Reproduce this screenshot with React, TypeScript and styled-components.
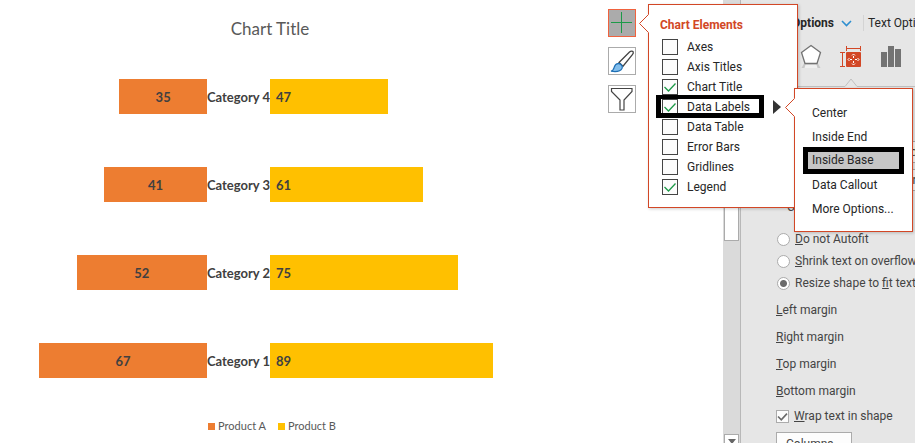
import React from "react";
import styled, { createGlobalStyle } from "styled-components";

const ACCENT = "#d24726";
const UI_FONT = 'Roboto, "Open Sans", sans-serif';
const CHART_FONT = 'Lato, "Open Sans", sans-serif';

const GlobalStyle = createGlobalStyle`
  *, *::before, *::after { box-sizing: border-box; }
  body { margin: 0; background: #fff; font-family: ${UI_FONT}; font-size: 12px; }
  button, input, select { font: inherit; color: inherit; margin: 0; }
`;

const Page = styled.div`
  position: relative;
  display: flex;
  height: 100vh;
  overflow: hidden;
`;

/* ---------- Chart ---------- */

const Chart = styled.main`
  flex: 1;
  min-width: 0;
  padding-top: 16px;
  font-family: ${CHART_FONT};
`;

const ChartTitle = styled.h1`
  margin: 0;
  text-align: center;
  font-size: 17px;
  line-height: 26px;
  font-weight: 400;
  color: #595959;
`;

const Plot = styled.div`
  display: grid;
  gap: 53px;
  padding: 37px 0;
`;

const PlotRow = styled.div`
  display: grid;
  grid-template-columns: 207fr 63px 270fr;
  height: 35px;
  align-items: center;
  font-size: 13px;
  font-weight: 700;
  color: #404040;
`;

const Category = styled.span`
  display: flex;
  justify-content: center;
  white-space: nowrap;
`;

const Bar = styled.div<{ $side: "left" | "right" }>`
  display: flex;
  align-items: center;
  height: 35px;
  justify-self: ${(p) => (p.$side === "left" ? "end" : "start")};
  justify-content: ${(p) => (p.$side === "left" ? "center" : "flex-start")};
  padding-left: ${(p) => (p.$side === "left" ? 0 : 6)}px;
  background: ${(p) => (p.$side === "left" ? "#ed7d31" : "#ffc000")};
`;

const Legend = styled.div`
  display: flex;
  justify-content: center;
  gap: 12px;
  padding-left: 4px;
  font-size: 11px;
  line-height: 22px;
  color: #595959;
`;

const LegendItem = styled.span<{ $color: string }>`
  display: flex;
  align-items: center;
  gap: 3px;
  &::before {
    content: "";
    width: 7px;
    height: 7px;
    background: ${(p) => p.$color};
  }
`;

const Tools = styled.div`
  display: flex;
  flex-direction: column;
  gap: 10px;
  width: 183px;
  padding: 9px 0 0 68px;
`;

const ToolButton = styled.button<{ $active?: boolean }>`
  display: grid;
  place-items: center;
  width: 28px;
  height: 28px;
  padding: 0;
  border: 1px solid ${(p) => (p.$active ? "#f0623e" : "#ababab")};
  background: ${(p) => (p.$active ? "#ababab" : "#fff")};
`;

/* ---------- Scrollbar ---------- */

const ScrollTrack = styled.div`
  display: flex;
  flex-direction: column;
  justify-content: space-between;
  width: 17px;
  padding: 6px 1px 0;
  background: #dadada;
`;

const ScrollThumb = styled.div`
  height: 235px;
  border: 1px solid #ababab;
  background: #fff;
`;

const ScrollDown = styled.button`
  display: grid;
  place-items: start center;
  width: 100%;
  height: 9px;
  padding: 4px 0 0;
  border: 1px solid #ababab;
  border-bottom: 0;
  background: #fff;
`;

/* ---------- Format pane ---------- */

const Pane = styled.aside`
  width: 175px;
  overflow: hidden;
  border-left: 1px solid #b8b8b8;
  background: #e6e6e6;
  color: #444;
  white-space: nowrap;
`;

const PaneTabs = styled.div`
  display: flex;
  align-items: center;
  height: 32px;
  margin-top: 7px;
  color: #262626;
`;

const PaneTab = styled.button<{ $current?: boolean }>`
  flex: none;
  width: ${(p) => (p.$current ? "111px" : "auto")};
  display: flex;
  align-items: center;
  justify-content: flex-end;
  gap: 7px;
  padding: 0;
  border: 0;
  background: none;
  font-size: 12px;
  font-weight: ${(p) => (p.$current ? 700 : 400)};
`;

const TabRule = styled.span`
  flex: none;
  width: 1px;
  height: 16px;
  margin: 0 4px 0 11px;
  background: #d4d4d4;
`;

const IconTabs = styled.div`
  display: flex;
  align-items: center;
  gap: 18px;
  padding: 4px 0 0 59px;
`;

const IconTab = styled.button`
  flex: none;
  display: grid;
  place-items: center;
  width: 22px;
  height: 26px;
  padding: 0;
  border: 0;
  background: none;
`;

const PaneRule = styled.svg`
  display: block;
  width: 174px;
  height: 10px;
  margin: 8px 0 54px;
`;

const PaneSelect = styled.select`
  display: block;
  appearance: none;
  width: 120px;
  height: 22px;
  margin: 0 0 6px 149px;
  padding: 0 6px;
  border: 1px solid #ababab;
  border-radius: 0;
  background: #f6f6f6;
`;

const CustomAngle = styled.div`
  padding-left: 46px;
  line-height: 20px;
`;

const RadioGroup = styled.div`
  display: grid;
  padding: 11px 0 3px 36px;
`;

const Choice = styled.label`
  display: flex;
  align-items: center;
  gap: 5px;
  height: 22px;
`;

const Radio = styled.input`
  appearance: none;
  flex: none;
  width: 13px;
  height: 13px;
  border: 1px solid #ababab;
  border-radius: 50%;
  background: #fff;
  &:checked {
    background: radial-gradient(circle, #6a6a6a 3px, #fff 4px);
  }
`;

const MarginLabel = styled.div`
  padding-left: 35px;
  line-height: 27px;
`;

const WrapChoice = styled(Choice)`
  padding-left: 35px;
`;

const ColumnsButton = styled.button`
  display: block;
  width: 76px;
  height: 24px;
  margin: 5px 0 0 35px;
  padding: 0 9px;
  border: 1px solid #ababab;
  background: #fdfdfd;
  text-align: left;
`;

/* ---------- Flyouts ---------- */

const Flyout = styled.section`
  position: absolute;
  border: 1px solid ${ACCENT};
  background: #fff;
  box-shadow: 1px 1px 3px rgba(0, 0, 0, 0.2);
  color: #262626;
  white-space: nowrap;
`;

const ElementsFlyout = styled(Flyout)`
  top: 4px;
  right: 117px;
  width: 150px;
  padding: 9px 0 10px 7px;
`;

const LabelsFlyout = styled(Flyout)`
  top: 88px;
  right: 2px;
  width: 119px;
  padding: 12px 8px 10px;
`;

const Notch = styled.svg`
  position: absolute;
  left: -10px;
  top: 9px;
  width: 10px;
  height: 19px;
`;

const FlyoutTitle = styled.h2`
  margin: 0 0 1px 4px;
  font-size: 12px;
  line-height: 22px;
  font-weight: 700;
  color: ${ACCENT};
`;

const ElementRow = styled.label<{ $marked?: boolean }>`
  position: relative;
  display: flex;
  align-items: center;
  gap: 9px;
  height: 20px;
  padding-left: 6px;
  &::after {
    content: "";
    display: ${(p) => (p.$marked ? "block" : "none")};
    position: absolute;
    left: 0;
    top: -2px;
    width: 108px;
    height: 23px;
    border: 5px solid #000;
    border-top-width: 4px;
  }
`;

const CheckWrap = styled.span<{ $size: number }>`
  flex: none;
  display: grid;
  width: ${(p) => p.$size}px;
  height: ${(p) => p.$size}px;
  & > * {
    grid-area: 1 / 1;
  }
  & > svg {
    pointer-events: none;
    width: 100%;
    height: 100%;
  }
  & > input:not(:checked) + svg {
    visibility: hidden;
  }
`;

const CheckInput = styled.input<{ $edge: string }>`
  appearance: none;
  width: 100%;
  height: 100%;
  border: 1px solid ${(p) => p.$edge};
  background: #fcfcfc;
`;

const Submenu = styled.svg`
  position: absolute;
  left: 117px;
  top: 3px;
  width: 8px;
  height: 14px;
`;

const MenuItem = styled.button<{ $marked?: boolean }>`
  display: block;
  position: relative;
  z-index: ${(p) => (p.$marked ? 1 : 0)};
  width: 101px;
  height: ${(p) => (p.$marked ? 27 : 24)}px;
  margin: ${(p) => (p.$marked ? "-2px 0 -1px" : "0")};
  padding: 0 0 0 ${(p) => (p.$marked ? 4 : 9)}px;
  border: ${(p) => (p.$marked ? "5px solid #000" : "0")};
  background: ${(p) => (p.$marked ? "#c6c6c6" : "none")};
  line-height: 17px;
  text-align: left;
`;

const ROWS = [
  { name: "Category 4", a: 35, b: 47 },
  { name: "Category 3", a: 41, b: 61 },
  { name: "Category 2", a: 52, b: 75 },
  { name: "Category 1", a: 67, b: 89 },
];

const LEFT_MAX = 82.6;
const RIGHT_MAX = 107.8;

const ELEMENTS: [string, boolean][] = [
  ["Axes", false],
  ["Axis Titles", false],
  ["Chart Title", true],
  ["Data Labels", true],
  ["Data Table", false],
  ["Error Bars", false],
  ["Gridlines", false],
  ["Legend", true],
];

const POSITIONS = ["Center", "Inside End", "Inside Base", "Data Callout", "More Options..."];

const PlusIcon = () => (
  <svg width="22" height="22" viewBox="0 0 22 22" stroke="#1d9a48" fill="none">
    <path d="M10.5 0v21M0 10.5h21" />
  </svg>
);

const BrushIcon = () => (
  <svg width="26" height="26" viewBox="0 0 26 26">
    <path d="M10 14.5 20.5 4c1.4-1.2 3.2-.9 3.6-.3.4.7.1 2-.7 3L14 18.2z" fill="#fff" stroke="#444" strokeWidth="1.3" />
    <path d="M2 23.2c2.6-.7 2.7-2.3 3.3-4.2.7-2.3 2.6-3.8 4.8-3.3 2.6.7 3.9 2.8 2.9 4.8-1.6 3.2-6.3 3.4-11 2.7z" fill="#83beec" stroke="#1e6fb4" strokeWidth="1.2" />
  </svg>
);

const FunnelIcon = () => (
  <svg width="26" height="26" viewBox="0 0 26 26" fill="#fff" stroke="#444" strokeWidth="1.2">
    <path d="M2.5 2.5h20.5v3l-8 8.500v10h-4v-10l-8.500-8.500z" />
  </svg>
);

const PentagonIcon = () => (
  <svg width="22" height="26" viewBox="0 0 22 26">
    <path d="M4 20.500h14l2.500 4.500H1.500z" fill="#c8c8c8" />
    <path d="M5.500 21.500h11l1 3.500h-13z" fill="#f0f0f0" />
    <path d="M11 2.500 20.500 9.500 17 20.500H5L1.500 9.500z" fill="#fff" stroke="#737373" strokeWidth="1.300" />
  </svg>
);

const SizeIcon = () => (
  <svg width="22" height="26" viewBox="0 0 22 26" fill="none">
    <rect x="6" y="9" width="15" height="15" rx="1" fill={ACCENT} />
    <path d="M6.500 3v5M20.500 3v5M7 5.500h13M0 9.500h5M0 23.500h5M2.500 10v13" stroke={ACCENT} />
    <path d="M13.500 13v2M13.500 18v2M10 16.500h2M15 16.500h2" stroke="#fff" />
    <path d="M12 12.500l1.500-1.500 1.500 1.500M12 20.500l1.500 1.500 1.500-1.500M9.500 15 8 16.500l1.500 1.500M17.500 15l1.500 1.500-1.500 1.500" stroke="#fff" />
  </svg>
);

const ColumnsIcon = () => (
  <svg width="22" height="26" viewBox="0 0 22 26" fill="#737373">
    <path d="M1 9h6v15H1zM8 3h6v21H8zM15 6h6v18h-6z" />
  </svg>
);

const NotchShape = () => (
  <Notch viewBox="0 0 10 19">
    <path d="M10 0v19L.5 9.500z" fill="#fff" />
    <path d="M9.500 .5.500 9.500l9 9" fill="none" stroke={ACCENT} />
  </Notch>
);

function Tick({ size, edge, color, checked }: { size: number; edge: string; color: string; checked: boolean }) {
  return (
    <CheckWrap $size={size}>
      <CheckInput type="checkbox" defaultChecked={checked} $edge={edge} />
      <svg viewBox="0 0 16 16" fill="none" stroke={color} strokeWidth={size > 14 ? 1.3 : 2}>
        <path d="M2.500 8 6.500 12 13.500 4.500" />
      </svg>
    </CheckWrap>
  );
}

export default function App() {
  return (
    <Page>
      <GlobalStyle />
      <Chart>
        <ChartTitle>Chart Title</ChartTitle>
        <Plot>
          {ROWS.map((r) => (
            <PlotRow key={r.name}>
              <Bar $side="left" style={{ width: `${(r.a / LEFT_MAX) * 100}%` }}>{r.a}</Bar>
              <Category>{r.name}</Category>
              <Bar $side="right" style={{ width: `${(r.b / RIGHT_MAX) * 100}%` }}>{r.b}</Bar>
            </PlotRow>
          ))}
        </Plot>
        <Legend>
          <LegendItem $color="#ed7d31">Product A</LegendItem>
          <LegendItem $color="#ffc000">Product B</LegendItem>
        </Legend>
      </Chart>
      <Tools>
        <ToolButton $active aria-label="Chart elements"><PlusIcon /></ToolButton>
        <ToolButton aria-label="Chart styles"><BrushIcon /></ToolButton>
        <ToolButton aria-label="Chart filters"><FunnelIcon /></ToolButton>
      </Tools>
      <ScrollTrack>
        <ScrollThumb />
        <ScrollDown aria-label="Scroll down">
          <svg width="8" height="5" viewBox="0 0 8 5"><path d="M0 0h8L4 5z" fill="#666" /></svg>
        </ScrollDown>
      </ScrollTrack>
      <Pane>
        <PaneTabs>
          <PaneTab $current>
            Shape Options
            <svg width="11" height="7" viewBox="0 0 11 7" fill="none" stroke="#2e8fd0" strokeWidth="1.600">
              <path d="M1 1l4.500 4.500L10 1" />
            </svg>
          </PaneTab>
          <TabRule />
          <PaneTab>Text Options</PaneTab>
        </PaneTabs>
        <IconTabs>
          <IconTab aria-label="Effects"><PentagonIcon /></IconTab>
          <IconTab aria-label="Size and properties"><SizeIcon /></IconTab>
          <IconTab aria-label="Chart options"><ColumnsIcon /></IconTab>
        </IconTabs>
        <PaneRule viewBox="0 0 174 10" fill="none" stroke="#c0c0c0">
          <path d="M14 9.500h90l6-7.500 6 7.500h58" />
        </PaneRule>
        <PaneSelect aria-label="Vertical alignment"><option>Middle</option></PaneSelect>
        <PaneSelect aria-label="Text direction"><option>Horizontal</option></PaneSelect>
        <CustomAngle>Custom angle</CustomAngle>
        <RadioGroup>
          <Choice><Radio type="radio" name="fit" /><span><u>D</u>o not Autofit</span></Choice>
          <Choice><Radio type="radio" name="fit" /><span><u>S</u>hrink text on overflow</span></Choice>
          <Choice><Radio type="radio" name="fit" defaultChecked /><span>Resize shape to <u>f</u>it text</span></Choice>
        </RadioGroup>
        <MarginLabel><u>L</u>eft margin</MarginLabel>
        <MarginLabel><u>R</u>ight margin</MarginLabel>
        <MarginLabel><u>T</u>op margin</MarginLabel>
        <MarginLabel><u>B</u>ottom margin</MarginLabel>
        <WrapChoice>
          <Tick size={13} edge="#ababab" color="#6a6a6a" checked />
          <span><u>W</u>rap text in shape</span>
        </WrapChoice>
        <ColumnsButton><u>C</u>olumns...</ColumnsButton>
      </Pane>

      <ElementsFlyout>
        <NotchShape />
        <FlyoutTitle>Chart Elements</FlyoutTitle>
        {ELEMENTS.map(([name, on]) => (
          <ElementRow key={name} $marked={name === "Data Labels"}>
            <Tick size={16} edge="#444" color="#1d9a48" checked={on} />
            {name}
            {name === "Data Labels" && (
              <Submenu viewBox="0 0 8 14"><path d="M0 0l8 7-8 7z" fill="#333" /></Submenu>
            )}
          </ElementRow>
        ))}
      </ElementsFlyout>
      <LabelsFlyout>
        <NotchShape />
        {POSITIONS.map((p) => (
          <MenuItem key={p} $marked={p === "Inside Base"}>{p}</MenuItem>
        ))}
      </LabelsFlyout>
    </Page>
  );
}
